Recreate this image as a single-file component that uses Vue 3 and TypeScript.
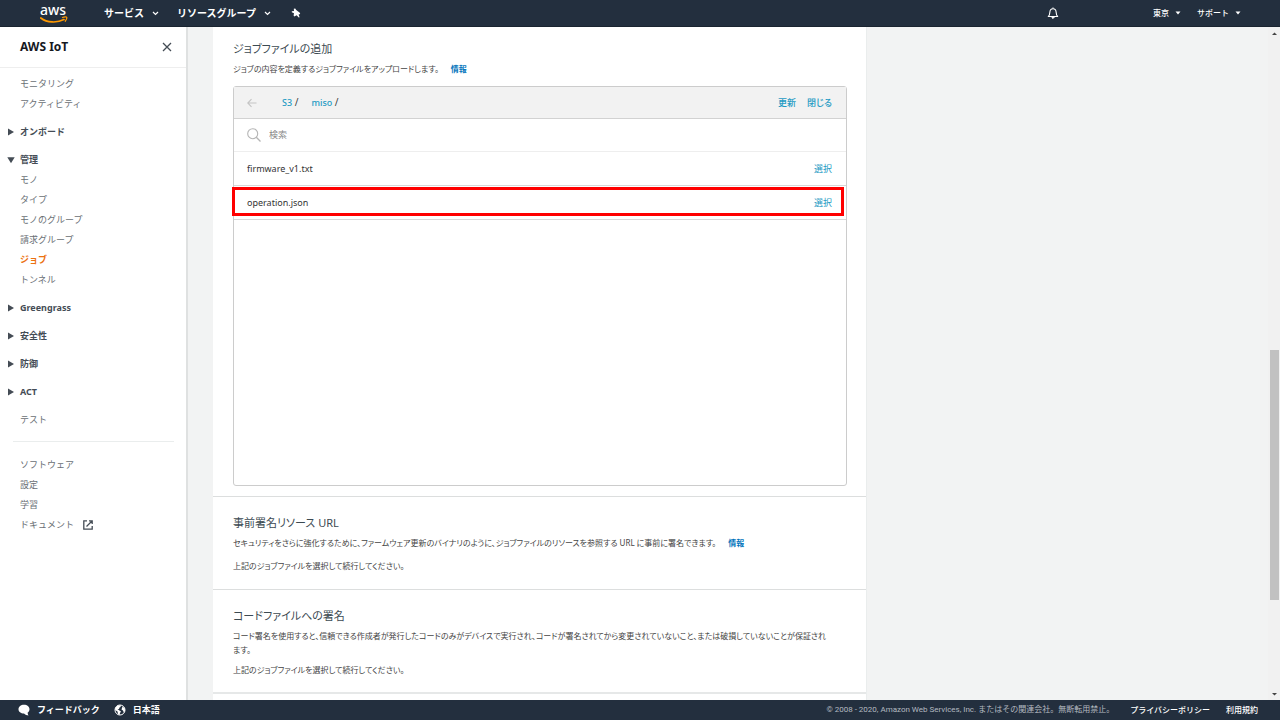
<script setup lang="ts">
import { ref } from 'vue'

interface NavGroup {
  label: string
  open?: boolean
  items?: string[]
}

const topItems: string[] = ['モニタリング', 'アクティビティ']
const groups: NavGroup[] = [
  { label: 'オンボード' },
  { label: '管理', open: true, items: ['モノ', 'タイプ', 'モノのグループ', '請求グループ', 'ジョブ', 'トンネル'] },
  { label: 'Greengrass' },
  { label: '安全性' },
  { label: '防御' },
  { label: 'ACT' },
]
const bottomItems: string[] = ['ソフトウェア', '設定', '学習']
const active = 'ジョブ'
const files: string[] = ['firmware_v1.txt', 'operation.json']
const highlighted = 'operation.json'
const query = ref('')
</script>

<template>
  <div class="page">
    <header class="topbar">
      <a href="#" class="logo" aria-label="aws">
        <span>aws</span>
        <svg width="28" height="8" viewBox="0 0 28 8">
          <path d="M.8 2C7 6.800 17 7.200 24 3.600" fill="none" stroke="#f90" stroke-width="1.700" stroke-linecap="round" />
          <path d="M22.500 1.500C24.500 .8 26.600 .8 26.800 1.400C27 2.400 26.300 4 25.300 5.200" fill="none" stroke="#f90" stroke-width="1.300" stroke-linecap="round" />
        </svg>
      </a>
      <button class="menu services">サービス
        <svg width="7" height="5" viewBox="0 0 7 5"><path d="M1 1l2.500 2.500L6 1" fill="none" stroke="#fff" stroke-width="1.200" /></svg>
      </button>
      <button class="menu resources">リソースグループ
        <svg width="7" height="5" viewBox="0 0 7 5"><path d="M1 1l2.500 2.500L6 1" fill="none" stroke="#fff" stroke-width="1.200" /></svg>
      </button>
      <button class="icon-button" aria-label="ピン">
        <svg width="10" height="10" viewBox="0 0 10 10"><path d="M2.800 .8L4.200 .4L5.200 2L8.800 4.800L9.200 6L7.600 6.400L8.600 9.200L7.800 9.500L5.600 7.200L3.400 8.400L2.600 7.600L3 5.200L.8 4.200L.8 3.200L3 3Z" fill="#fff" /></svg>
      </button>
      <span class="grow"></span>
      <button class="icon-button bell" aria-label="通知">
        <svg width="12" height="12" viewBox="0 0 12 12"><path d="M1.300 9.500C2.600 8.300 2.800 7 2.900 5C3 2.700 4.200 1.700 6 1.700S9 2.700 9.100 5C9.200 7 9.400 8.300 10.700 9.500Z" fill="none" stroke="#fff" stroke-width="1.100" stroke-linejoin="round" /><path d="M6 .4v1.200M4.700 10.300h2.600L6 11.600Z" stroke="#fff" fill="#fff" stroke-width=".9" /></svg>
      </button>
      <button class="small-menu region">東京
        <svg width="6" height="4" viewBox="0 0 6 4"><path d="M.5.5h5L3 3.500Z" fill="#fff" /></svg>
      </button>
      <button class="small-menu support">サポート
        <svg width="6" height="4" viewBox="0 0 6 4"><path d="M.5.5h5L3 3.500Z" fill="#fff" /></svg>
      </button>
    </header>

    <div class="body">
      <nav class="sidebar">
        <div class="side-head">
          <strong>AWS IoT</strong>
          <button class="icon-button" aria-label="ナビゲーションを閉じる">
            <svg width="10" height="10" viewBox="0 0 10 10"><path d="M1 1l8 8M9 1l-8 8" stroke="#444c55" stroke-width="1.300" /></svg>
          </button>
        </div>
        <div class="side-list">
          <a v-for="item in topItems" :key="item" href="#" class="side-item">{{ item }}</a>
          <template v-for="group in groups" :key="group.label">
            <button class="side-group" :aria-expanded="!!group.open">
              <svg width="8" height="8" viewBox="0 0 8 8"><path :d="group.open ? 'M.3 1.300h7.400L4 7.300Z' : 'M1 .5v7L7 4Z'" fill="#444c55" /></svg>
              {{ group.label }}
            </button>
            <a v-for="item in group.items ?? []" :key="item" href="#" class="side-item" :class="{ active: item === active }">{{ item }}</a>
          </template>
          <a href="#" class="side-item test">テスト</a>
          <hr />
          <a v-for="item in bottomItems" :key="item" href="#" class="side-item">{{ item }}</a>
          <a href="#" class="side-item">ドキュメント
            <svg width="10" height="10" viewBox="0 0 10 10"><path d="M4 .8H.8v8.400h8.400V6M6 .8h3.200V4M9 1L3.500 6.500" fill="none" stroke="#444c55" stroke-width="1.300" /></svg>
          </a>
        </div>
      </nav>

      <main class="content">
        <div class="card">
          <section class="first">
            <h2>ジョブファイルの追加</h2>
            <p>ジョブの内容を定義するジョブファイルをアップロードします。<a href="#" class="info">情報</a></p>
            <div class="browser">
              <div class="crumbs">
                <button class="back" aria-label="戻る">
                  <svg width="10" height="10" viewBox="0 0 10 10"><path d="M9.500 5H1M4.500 1.200L.8 5l3.700 3.800" fill="none" stroke="#c4c4c4" stroke-width="1.100" /></svg>
                </button>
                <span class="crumb"><a href="#">S3</a> /</span>
                <span class="crumb"><a href="#">miso</a> /</span>
                <span class="grow"></span>
                <button class="link strong">更新</button>
                <button class="link strong">閉じる</button>
              </div>
              <label class="search">
                <svg width="14" height="14" viewBox="0 0 14 14"><circle cx="5.700" cy="5.700" r="5" fill="none" stroke="#b5b5b5" stroke-width="1.100" /><path d="M9.300 9.300l4.200 4.200" stroke="#b5b5b5" stroke-width="1.300" /></svg>
                <input v-model="query" type="text" placeholder="検索" aria-label="検索" />
              </label>
              <ul>
                <li v-for="file in files" :key="file" :class="{ marked: file === highlighted }">
                  <span>{{ file }}</span>
                  <button class="link">選択</button>
                </li>
              </ul>
            </div>
          </section>
          <section>
            <h2>事前署名リソース URL</h2>
            <p>セキュリティをさらに強化するために、ファームウェア更新のバイナリのように、ジョブファイルのリソースを参照する URL に事前に署名できます。<a href="#" class="info">情報</a></p>
            <p class="note">上記のジョブファイルを選択して続行してください。</p>
          </section>
          <section class="signing">
            <h2>コードファイルへの署名</h2>
            <p>コード署名を使用すると、信頼できる作成者が発行したコードのみがデバイスで実行され、コードが署名されてから変更されていないこと、または破損していないことが保証され<br />ます。</p>
            <p class="note">上記のジョブファイルを選択して続行してください。</p>
          </section>
        </div>
      </main>

      <div class="scrollbar" aria-hidden="true">
        <svg width="5" height="11" viewBox="0 0 5 11"><path d="M0 8h5L2.500 5.500Z" fill="#444" /></svg>
        <div class="before"></div>
        <div class="thumb"></div>
        <div class="after"></div>
        <svg width="5" height="11" viewBox="0 0 5 11"><path d="M0 4h5L2.500 6.500Z" fill="#444" /></svg>
      </div>
    </div>

    <footer class="footer">
      <button class="foot-button feedback">
        <svg width="12" height="12" viewBox="0 0 12 12"><path d="M6 .8C2.800.8.5 2.700.5 5.200S2.800 9.500 6 9.500C7 10.700 9 11.500 10.600 11.500C9.800 10.600 9.700 9.600 9.700 8.500C10.900 7.700 11.500 6.500 11.500 5.200C11.500 2.700 9.200.8 6 .8Z" fill="#fff" /></svg>
        フィードバック
      </button>
      <button class="foot-button">
        <svg width="12" height="12" viewBox="0 0 12 12"><circle cx="6" cy="6" r="5" fill="none" stroke="#fff" stroke-width="1" /><path d="M1.300 4L3.500 1.500L7 1.200L6.500 3L5.500 3.500L5 5L3.500 5.200L5.500 6.500L7 7.500L6 9L5.500 11L4 10L3.500 7.500L1.200 6ZM8.500 2.500L10.800 4.500L11 7L9.800 8.500L9 6.500L7.500 5.500L8 4Z" fill="#fff" /></svg>
        日本語
      </button>
      <span class="grow"></span>
      <span class="copyright">© 2008 - 2020, Amazon Web Services, Inc. またはその関連会社。無断転用禁止。</span>
      <a href="#">プライバシーポリシー</a>
      <a href="#">利用規約</a>
    </footer>
  </div>
</template>

<style>
body {
  margin: 0;
}
</style>

<style scoped>
.page {
  display: flex;
  flex-direction: column;
  height: 100vh;
  overflow: hidden;
  background: #f2f3f3;
  color: #444;
  font: 9px/14px "Noto Sans", "Noto Sans CJK JP", sans-serif;
}
.page * {
  box-sizing: border-box;
}
button {
  display: flex;
  align-items: center;
  padding: 0;
  border: 0;
  background: none;
  color: inherit;
  font: inherit;
  white-space: nowrap;
  cursor: pointer;
}
a {
  color: inherit;
  text-decoration: none;
}
svg {
  flex: none;
}
.grow {
  flex: 1;
}
.topbar {
  display: flex;
  align-items: center;
  flex: none;
  height: 27px;
  padding: 0 39px 0 40px;
  border-bottom: 1px solid #1a2430;
  background: #232f3e;
  color: #fff;
}
.logo {
  display: flex;
  flex-direction: column;
  width: 64px;
  font-size: 14px;
  font-weight: 500;
  line-height: 16px;
}
.logo svg {
  margin-top: -2px;
}
.menu {
  gap: 8px;
  font-size: 10px;
  font-weight: 700;
}
.services {
  margin-right: 18px;
}
.resources {
  margin-right: 20px;
}
.bell {
  margin-right: 94px;
}
.small-menu {
  gap: 6px;
  font-size: 8px;
  font-weight: 500;
}
.region {
  margin-right: 16px;
}
.body {
  display: flex;
  flex: 1;
  min-height: 0;
}
.sidebar {
  flex: none;
  width: 188px;
  border-right: 2px solid #dfe1e1;
  background: #fff;
}
.side-head {
  display: flex;
  align-items: center;
  justify-content: space-between;
  height: 41px;
  padding: 0 14px 0 20px;
  border-bottom: 1px solid #eee;
  color: #16191f;
  font-size: 12px;
}
.side-list {
  display: flex;
  flex-direction: column;
  padding-top: 6px;
}
.side-item {
  display: flex;
  align-items: center;
  gap: 9px;
  height: 20px;
  padding-left: 20px;
  color: #6a6f75;
}
.side-item.active {
  color: #ec7211;
  font-weight: 700;
}
.side-group {
  gap: 5px;
  height: 20px;
  margin-top: 8px;
  padding-left: 7px;
  color: #444c55;
  font-weight: 700;
}
.test {
  margin-top: 8px;
}
hr {
  width: auto;
  height: 1px;
  margin: 11px 12px 13px 13px;
  border: 0;
  background: #eaeded;
}
.content {
  flex: 1;
  min-width: 0;
  padding-left: 25px;
  overflow: hidden;
}
.card {
  max-width: 654px;
  min-height: 100%;
  border-right: 1px solid #eaeded;
  background: #fff;
}
section {
  padding: 17px 19px 15px 20px;
  border-bottom: 1px solid #dcdede;
}
.first {
  padding: 13px 19px 10px 20px;
}
.signing {
  border-bottom: 2px solid #e6e8e8;
}
h2 {
  margin: 0 0 4px;
  color: #3c4a52;
  font-size: 11px;
  font-weight: 400;
  line-height: 18px;
  font-feature-settings: "palt";
}
p {
  margin: 0;
  font-size: 8px;
  font-feature-settings: "palt";
}
.note {
  margin-top: 9px;
}
.signing .note {
  margin-top: 6px;
}
.info {
  margin-left: 12px;
  color: #0073bb;
  font-weight: 700;
}
section:not(.first):not(.signing) {
  padding-bottom: 16px;
}
.browser {
  height: 400px;
  margin-top: 10px;
  border: 1px solid #ccc;
  border-radius: 3px;
}
.crumbs {
  display: flex;
  align-items: center;
  height: 32px;
  padding: 0 14px 0 13px;
  border-bottom: 1px solid #d2d2d2;
  background: #f2f2f2;
  font-feature-settings: "palt";
}
.back {
  margin-right: 25px;
}
.crumb {
  margin-right: 13px;
  font-size: 10px;
}
.crumb a {
  font-size: 9px;
}
.crumb a,
.link {
  color: #1f9bc4;
}
.crumb a,
.strong {
  font-weight: 500;
}
.strong + .strong {
  margin-left: 11px;
}
.search {
  display: flex;
  align-items: center;
  gap: 8px;
  height: 33px;
  padding: 0 13px;
  border-bottom: 1px solid #eee;
}
input {
  flex: 1;
  min-width: 0;
  padding: 0;
  border: 0;
  outline: 0;
  background: none;
  color: inherit;
  font: inherit;
}
input::placeholder {
  color: #888;
  opacity: 1;
}
ul {
  margin: 0;
  padding: 0;
  list-style: none;
}
li {
  position: relative;
  display: flex;
  align-items: center;
  justify-content: space-between;
  height: 34px;
  padding: 0 14px 0 13px;
  border-bottom: 1px solid #d8d8d8;
  color: #333;
}
.marked::after {
  position: absolute;
  inset: 1px 2px 3px -2px;
  border: 3px solid #f00;
  content: "";
  pointer-events: none;
}
.scrollbar {
  display: flex;
  flex: none;
  flex-direction: column;
  align-items: center;
  width: 12px;
  background: #f1f1f1;
}
.before {
  flex: 312;
}
.thumb {
  flex: 250;
  width: 9px;
  background: #c1c1c1;
}
.after {
  flex: 89;
}
.footer {
  display: flex;
  align-items: center;
  flex: none;
  height: 20px;
  padding: 0 22px 0 18px;
  background: #232f3e;
  color: #fff;
  font-size: 8px;
  font-weight: 500;
  white-space: nowrap;
}
.foot-button {
  gap: 7px;
  font-size: 9px;
  font-weight: 700;
}
.feedback {
  margin-right: 14px;
}
.copyright {
  color: #b4bac0;
  font-family: Roboto, "Noto Sans CJK JP", sans-serif;
  font-weight: 400;
}
.footer a {
  margin-left: 16px;
}
</style>
